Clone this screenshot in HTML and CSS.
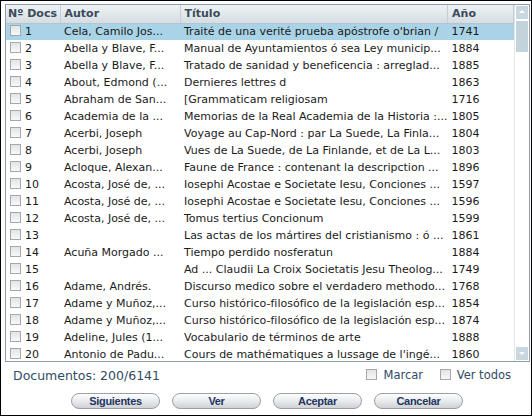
FILE: index.html
```html
<!DOCTYPE html>
<html lang="es">
<head>
    <meta charset="UTF-8">
    <title>Documentos</title>
    <link rel="stylesheet" href="styles.css">
</head>
<body>
    <div class="frame">
        <div class="list-box">
            <table class="docs">
                <colgroup>
                    <col class="c-num"><col class="c-autor"><col class="c-titulo"><col class="c-ano">
                </colgroup>
                <thead>
                    <tr><th>Nº Docs</th><th>Autor</th><th>Título</th><th>Año</th></tr>
                </thead>
                <tbody>
                    <tr class="sel"><td><span class="chk"></span>1</td><td>Cela, Camilo Jos...</td><td>Traité de una verité prueba apóstrofe o'brian /</td><td>1741</td></tr>
                    <tr><td><span class="chk"></span>2</td><td>Abella y Blave, F...</td><td>Manual de Ayuntamientos ó sea Ley municip...</td><td>1884</td></tr>
                    <tr><td><span class="chk"></span>3</td><td>Abella y Blave, F...</td><td>Tratado de sanidad y beneficencia : arreglad...</td><td>1885</td></tr>
                    <tr><td><span class="chk"></span>4</td><td>About, Edmond (...</td><td>Dernieres lettres d</td><td>1863</td></tr>
                    <tr><td><span class="chk"></span>5</td><td>Abraham de San...</td><td>[Grammaticam religiosam</td><td>1716</td></tr>
                    <tr><td><span class="chk"></span>6</td><td>Academia de la ...</td><td>Memorias de la Real Academia de la Historia :...</td><td>1805</td></tr>
                    <tr><td><span class="chk"></span>7</td><td>Acerbi, Joseph</td><td>Voyage au Cap-Nord : par La Suede, La Finla...</td><td>1804</td></tr>
                    <tr><td><span class="chk"></span>8</td><td>Acerbi, Joseph</td><td>Vues de La Suede, de La Finlande, et de La L...</td><td>1803</td></tr>
                    <tr><td><span class="chk"></span>9</td><td>Acloque, Alexan...</td><td>Faune de France : contenant la descripction ...</td><td>1896</td></tr>
                    <tr><td><span class="chk"></span>10</td><td>Acosta, José de, ...</td><td>Iosephi Acostae e Societate Iesu, Conciones ...</td><td>1597</td></tr>
                    <tr><td><span class="chk"></span>11</td><td>Acosta, José de, ...</td><td>Iosephi Acostae e Societate Iesu, Conciones ...</td><td>1596</td></tr>
                    <tr><td><span class="chk"></span>12</td><td>Acosta, José de, ...</td><td>Tomus tertius Concionum</td><td>1599</td></tr>
                    <tr><td><span class="chk"></span>13</td><td></td><td>Las actas de los mártires del cristianismo : ó ...</td><td>1861</td></tr>
                    <tr><td><span class="chk"></span>14</td><td>Acuña Morgado ...</td><td>Tiempo perdido nosferatun</td><td>1884</td></tr>
                    <tr><td><span class="chk"></span>15</td><td></td><td>Ad ... Claudii La Croix Societatis Jesu Theolog...</td><td>1749</td></tr>
                    <tr><td><span class="chk"></span>16</td><td>Adame, Andrés.</td><td>Discurso medico sobre el verdadero methodo...</td><td>1768</td></tr>
                    <tr><td><span class="chk"></span>17</td><td>Adame y Muñoz,...</td><td>Curso histórico-filosófico de la legislación esp...</td><td>1854</td></tr>
                    <tr><td><span class="chk"></span>18</td><td>Adame y Muñoz,...</td><td>Curso histórico-filosófico de la legislación esp...</td><td>1874</td></tr>
                    <tr><td><span class="chk"></span>19</td><td>Adeline, Jules (1...</td><td>Vocabulario de términos de arte</td><td>1888</td></tr>
                    <tr><td><span class="chk"></span>20</td><td>Antonio de Padu...</td><td>Cours de mathématiques a lussage de l'ingé...</td><td>1860</td></tr>
                </tbody>
            </table>
            <div class="scrollbar">
                <div class="sb-btn up"></div>
                <div class="sb-thumb"></div>
                <div class="sb-track"></div>
                <div class="sb-btn down"></div>
            </div>
        </div>
        <div class="status">
            <span class="count">Documentos: 200/6141</span>
            <span class="opts">
                <label><span class="chk"></span>Marcar</label>
                <label><span class="chk"></span>Ver todos</label>
            </span>
        </div>
        <div class="buttons">
            <button class="btn">Siguientes</button>
            <button class="btn">Ver</button>
            <button class="btn">Aceptar</button>
            <button class="btn">Cancelar</button>
        </div>
    </div>
</body>
</html>
```

FILE: styles.css
```css
* {
    box-sizing: border-box;
}
body {
    margin: 0;
    padding: 0;
    background: #fff;
    font-family: 'DejaVu Sans', sans-serif;
    font-size: 11px;
    color: #1a1a1a;
}
.frame {
    width: 532px;
    height: 416px;
    border: 1px solid #000;
    padding: 3px 2px 0 4px;
}
.list-box {
    display: flex;
    width: 525px;
    height: 358px;
    border: 1px solid #8d9ca8;
    overflow: hidden;
}
.docs {
    flex: 1;
    border-collapse: collapse;
    table-layout: fixed;
}
.c-num { width: 54px; }
.c-autor { width: 120px; }
.c-titulo { width: 262px; }
.docs th {
    height: 18px;
    padding: 0 0 0 4px;
    text-align: left;
    font-weight: bold;
    font-size: 11px;
    color: #3b4b59;
    background: linear-gradient(#eef2f4, #d5dde2);
    border-right: 1px solid #c4ced5;
    border-bottom: 1px solid #b8c4cc;
    white-space: nowrap;
    overflow: hidden;
}
.docs th:first-child {
    padding-left: 2px;
}
.docs td {
    height: 17px;
    padding: 0 0 0 4px;
    white-space: nowrap;
    overflow: hidden;
}
.docs td:first-child {
    padding-left: 4px;
}
.docs tr.sel td {
    background: #a9d3e6;
}
.chk {
    display: inline-block;
    width: 11px;
    height: 11px;
    margin-right: 4px;
    vertical-align: -1px;
    border: 1px solid #a4a8ac;
    background: linear-gradient(#e2e4e6, #f8f8f8);
}
.scrollbar {
    width: 15px;
    display: flex;
    flex-direction: column;
    border-left: 1px solid #dfe5e9;
    padding: 1px;
}
.sb-btn {
    height: 13px;
    background: #c7d6df;
    position: relative;
}
.sb-btn::after {
    content: "";
    position: absolute;
    left: 3px;
    border-left: 3px solid transparent;
    border-right: 3px solid transparent;
}
.sb-btn.up::after {
    top: 4px;
    border-bottom: 3px solid #fff;
}
.sb-btn.down::after {
    top: 5px;
    border-top: 3px solid #fff;
}
.sb-thumb {
    height: 31px;
    margin-top: 2px;
    background: #c3d3dc;
}
.sb-track {
    flex: 1;
}
.status {
    display: flex;
    justify-content: space-between;
    align-items: center;
    height: 26px;
    padding: 0 18px 0 8px;
    color: #2f4b66;
    font-size: 11.5px;
}
.count {
    font-size: 12.5px;
}
.opts label {
    margin-left: 13px;
}
.opts .chk {
    margin-right: 6px;
}
.buttons {
    display: flex;
    justify-content: center;
    gap: 12px;
    padding-top: 5px;
}
.btn {
    width: 89px;
    height: 16px;
    border: 1px solid #9aa0a6;
    border-radius: 8px;
    background: linear-gradient(#ffffff, #e6e8ea 55%, #cfd2d5);
    font-family: 'Liberation Sans', Arial, sans-serif;
    font-size: 11px;
    font-weight: bold;
    color: #1f3560;
    letter-spacing: -0.3px;
    padding: 0;
}
```
